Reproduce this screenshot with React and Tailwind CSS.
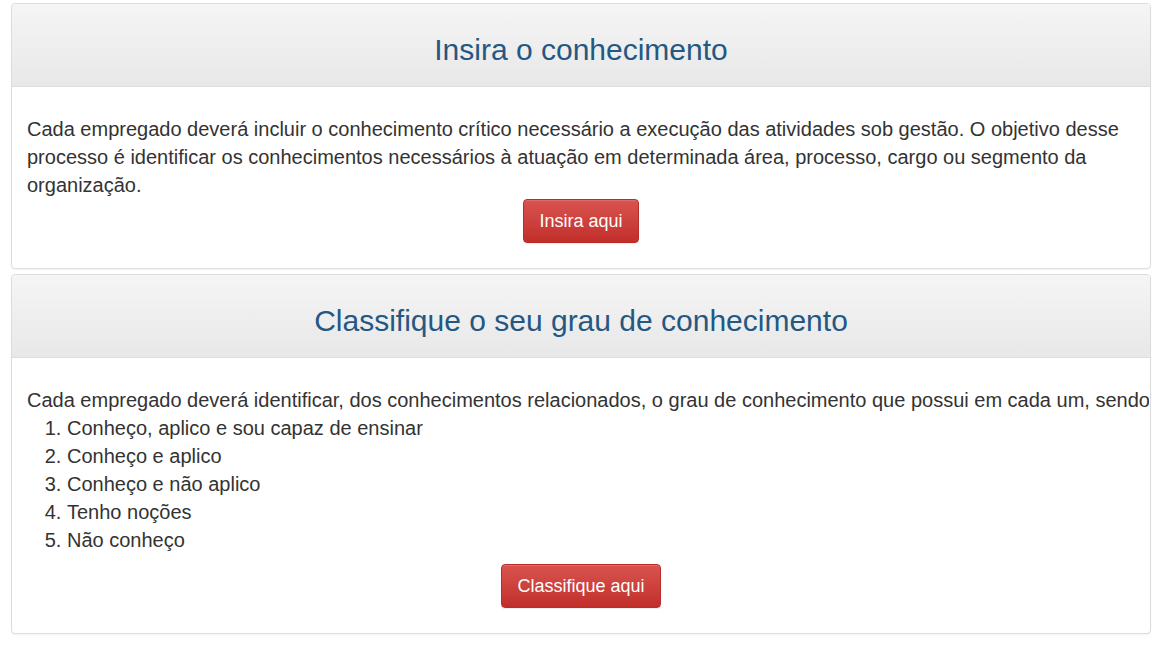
const NIVEIS = [
  'Conheço, aplico e sou capaz de ensinar',
  'Conheço e aplico',
  'Conheço e não aplico',
  'Tenho noções',
  'Não conheço',
]

function Panel({ title, children }) {
  return (
    <div className="rounded-[4px] border border-[#dddddd] bg-white shadow-[0_1px_2px_rgba(0,0,0,0.05)] overflow-hidden">
      <div className="h-[83px] pt-[9px] flex items-center justify-center border-b border-[#dddddd] bg-gradient-to-b from-[#f5f5f5] to-[#e8e8e8]">
        <h3 className="text-[30px] leading-none text-[#245883]">{title}</h3>
      </div>
      {children}
    </div>
  )
}

function RedButton({ children }) {
  return (
    <div className="flex justify-center">
      <button className="h-[44px] px-[15px] rounded-[4px] border border-[#b92c28] bg-gradient-to-b from-[#d9534f] to-[#c12e2a] text-white text-[18px] shadow-[inset_0_1px_0_rgba(255,255,255,0.15),0_1px_1px_rgba(0,0,0,0.075)]">
        {children}
      </button>
    </div>
  )
}

export default function App() {
  return (
    <div className="w-[1157px] h-[647px] bg-white pl-[11px] pr-[6px] pt-[3px] text-[#333333] font-['Liberation_Sans',Arial,sans-serif]">
      <Panel title="Insira o conhecimento">
        <div className="px-[15px] pt-[28px] pb-[25px]">
          <p className="text-[20px] leading-[28px]">
            Cada empregado deverá incluir o conhecimento crítico necessário a execução das atividades sob gestão. O objetivo desse processo é identificar os conhecimentos necessários à atuação em determinada área, processo, cargo ou segmento da organização.
          </p>
          <RedButton>Insira aqui</RedButton>
        </div>
      </Panel>
      <div className="h-[5px]" />
      <Panel title="Classifique o seu grau de conhecimento">
        <div className="px-[15px] pt-[28px] pb-[25px]">
          <p className="text-[20px] leading-[28px] whitespace-nowrap overflow-hidden -mr-[14px]">
            Cada empregado deverá identificar, dos conhecimentos relacionados, o grau de conhecimento que possui em cada um, sendo:
          </p>
          <ol className="list-decimal pl-[40px] text-[20px] leading-[28px] mb-[10px]">
            {NIVEIS.map(n => <li key={n}>{n}</li>)}
          </ol>
          <RedButton>Classifique aqui</RedButton>
        </div>
      </Panel>
    </div>
  )
}
